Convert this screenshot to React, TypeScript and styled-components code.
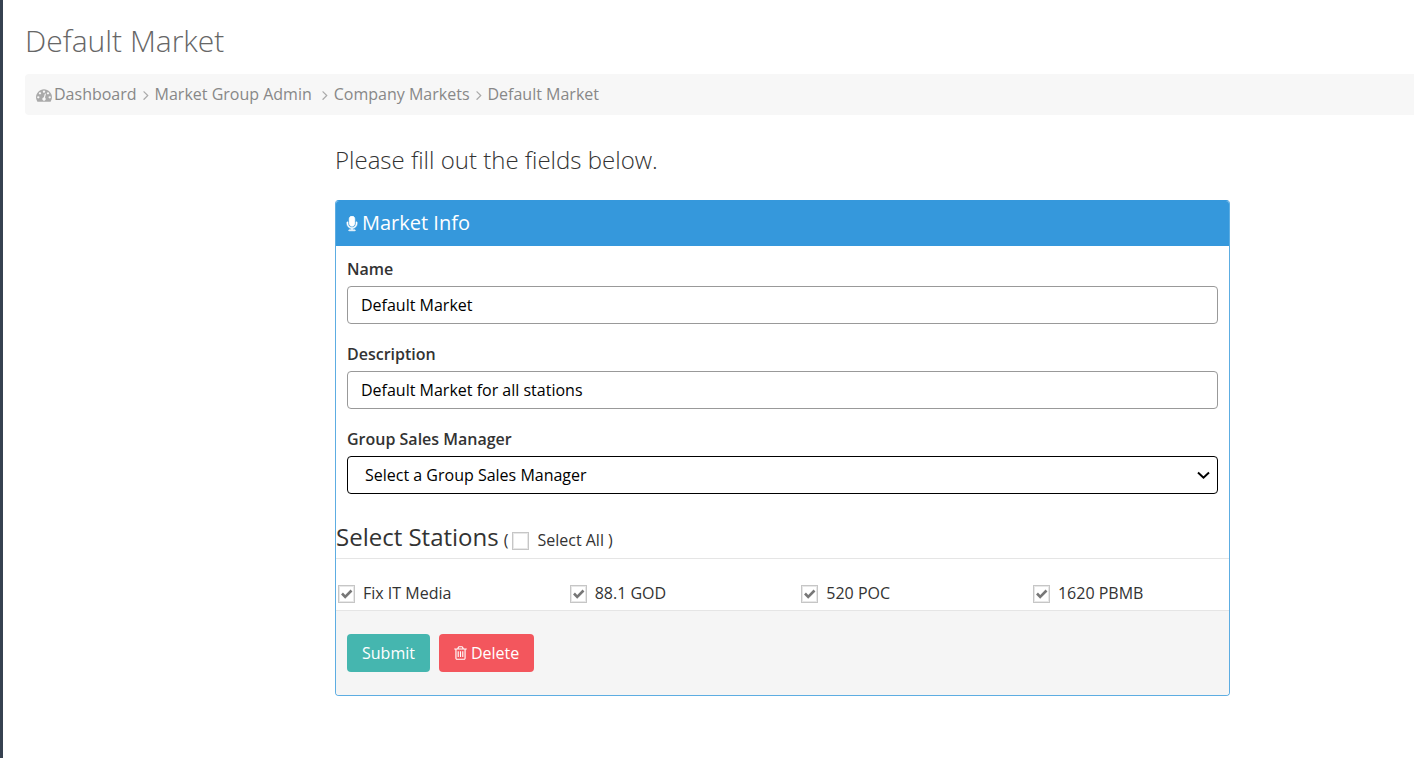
import React, { useState } from 'react';
import styled, { createGlobalStyle, css } from 'styled-components';

const GlobalStyle = createGlobalStyle`
  * { box-sizing: border-box; }
  body {
    margin: 0;
    background: #fff;
    color: #333;
    font: 400 16px/24px 'Open Sans', sans-serif;
  }
`;

const Page = styled.div`
  min-height: 100vh;
  border-left: 3px solid #364150;
  padding: 20px 0 62px 22px;
`;

const PageTitle = styled.h1`
  margin: 0 0 12px;
  color: #666;
  font-size: 30px;
  line-height: 42px;
  font-weight: 300;
`;

const Breadcrumb = styled.nav`
  display: flex;
  align-items: center;
  flex-wrap: wrap;
  min-height: 41px;
  padding: 0 11px 2px;
  background: #f7f7f7;
  border-radius: 4px 0 0 4px;
  color: #aaa;
`;

const Crumb = styled.a<{ $wide?: boolean }>`
  color: #888;
  text-decoration: none;
  margin-right: ${(p) => (p.$wide ? 7 : 3)}px;
`;

const Icon = styled.svg`
  width: 16px;
  height: 16px;
  flex: none;
  fill: currentColor;
`;

const DashboardIcon = styled(Icon)`
  margin: 2px 2px 0 0;
`;

const TrashIcon = styled(Icon)`
  width: 13px;
`;

const CrumbArrow = styled(Icon)`
  width: 12px;
  margin: 2px 3px 0 0;
`;

const Columns = styled.main`
  display: grid;
  grid-template-columns: 310fr 895fr 184fr;
`;

const FormColumn = styled.div`
  grid-column: 2;
  min-width: 0;
`;

const Lead = styled.h3`
  margin: 29px 0 25px;
  font-size: 24px;
  line-height: 31px;
  font-weight: 300;
`;

const Panel = styled.form`
  border: 1px solid #5dade2;
  border-top-color: #3598dc;
  border-radius: 4px;
  overflow: hidden;
`;

const PanelHeader = styled.header`
  display: flex;
  align-items: center;
  gap: 2px;
  height: 45px;
  padding: 0 8px 2px;
  background: #3598dc;
  color: #fff;
`;

const MicrophoneIcon = styled(Icon)`
  margin-top: 2px;
`;

const PanelTitle = styled.h2`
  margin: 0;
  font-size: 20px;
  line-height: 24px;
  font-weight: 400;
`;

const Fields = styled.div`
  display: flex;
  flex-direction: column;
  gap: 18px;
  padding: 11px 11px 26px;
`;

const Field = styled.div`
  display: flex;
  flex-direction: column;
  gap: 5px;
`;

const FieldLabel = styled.label`
  font-weight: 600;
  line-height: 24px;
`;

const controlBox = css`
  width: 100%;
  height: 38px;
  background: #fff;
  border-radius: 4px;
  color: #000;
  font: inherit;
  outline: none;
`;

const TextInput = styled.input`
  ${controlBox}
  padding: 0 13px;
  border: 1px solid #999;
`;

const SelectWrap = styled.div`
  position: relative;
`;

const SelectBox = styled.select`
  ${controlBox}
  display: block;
  appearance: none;
  padding: 0 32px 0 17px;
  border: 1px solid #000;
`;

const SelectArrow = styled.svg`
  position: absolute;
  top: 15px;
  right: 8px;
  width: 13px;
  height: 9px;
  fill: none;
  stroke: #000;
  stroke-width: 2;
  pointer-events: none;
`;

const StationsHeading = styled.div`
  display: flex;
  align-items: baseline;
  gap: 5px;
  padding-bottom: 5px;
  border-bottom: 1px solid #e5e5e5;
`;

const StationsTitle = styled.h3`
  margin: 0;
  font-size: 24px;
  line-height: 33px;
  font-weight: 400;
`;

const SelectAll = styled.div`
  display: flex;
  align-items: center;
  gap: 4px;
`;

const CheckLabel = styled.label`
  display: inline-flex;
  align-items: center;
  gap: 8px;
`;

const CheckBox = styled.span`
  display: grid;
  width: 17px;
  height: 18px;
  margin-top: 2px;

  > * { grid-area: 1 / 1; }
`;

const CheckInput = styled.input`
  appearance: none;
  width: 100%;
  height: 100%;
  margin: 0;
  border: 1px solid #c6c6c6;
  box-shadow: inset 0 0 0 1px #e8e8e8;
  background: #fff;

  &:not(:checked) + svg { visibility: hidden; }
`;

const CheckMark = styled.svg`
  width: 17px;
  height: 18px;
  fill: none;
  stroke: #777;
  stroke-width: 2.6;
  pointer-events: none;
`;

const StationGrid = styled.div`
  display: grid;
  grid-template-columns: repeat(3, 26fr) 22fr;
  padding: 22px 0 5px 2px;
`;

const Actions = styled.footer`
  display: flex;
  gap: 9px;
  padding: 23px 11px;
  background: #f5f5f5;
  border-top: 1px solid #e5e5e5;
`;

const Button = styled.button<{ $color: string }>`
  display: inline-flex;
  align-items: center;
  gap: 4px;
  height: 38px;
  padding: 0 15px;
  border: 0;
  border-radius: 4px;
  background: ${(p) => p.$color};
  color: #fff;
  font: inherit;
  cursor: pointer;
`;

const DASHBOARD =
  'M384 1152q0-53-37.5-90.5t-90.5-37.5-90.5 37.5-37.5 90.5 37.5 90.5 90.5 37.5 90.5-37.5 37.5-90.5zm192-448q0-53-37.5-90.5t-90.5-37.5-90.5 37.5-37.5 90.5 37.5 90.5 90.5 37.5 90.5-37.5 37.5-90.5zm428 481l101-382q6-26-7.5-48.5t-38.5-29.5-48 6.5-30 39.5l-101 382q-60 5-107 43.5t-63 98.5q-20 77 20 146t117 89 146-20 89-117q16-60-6-117t-72-91zm660-33q0-53-37.5-90.5t-90.5-37.5-90.5 37.5-37.5 90.5 37.5 90.5 90.5 37.5 90.5-37.5 37.5-90.5zm-640-640q0-53-37.5-90.5t-90.5-37.5-90.5 37.5-37.5 90.5 37.5 90.5 90.5 37.5 90.5-37.5 37.5-90.5zm448 192q0-53-37.5-90.5t-90.5-37.5-90.5 37.5-37.5 90.5 37.5 90.5 90.5 37.5 90.5-37.5 37.5-90.5zm320 448q0 261-141 483-19 29-54 29h-1402q-35 0-54-29-141-221-141-483 0-182 71-348t191-286 286-191 348-71 348 71 286 191 191 286 71 348z';
const MICROPHONE =
  'M1472 704v128q0 221-147.5 384.5t-364.5 187.5v132h256q26 0 45 19t19 45-19 45-45 19h-640q-26 0-45-19t-19-45 19-45 45-19h256v-132q-217-24-364.5-187.5t-147.5-384.5v-128q0-26 19-45t45-19 45 19 19 45v128q0 185 131.5 316.5t316.5 131.5 316.5-131.5 131.5-316.5v-128q0-26 19-45t45-19 45 19 19 45zm-256-384v512q0 132-94 226t-226 94-226-94-94-226v-512q0-132 94-226t226-94 226 94 94 226z';
const TRASH =
  'M704 736v576q0 14-9 23t-23 9h-64q-14 0-23-9t-9-23v-576q0-14 9-23t23-9h64q14 0 23 9t9 23zm256 0v576q0 14-9 23t-23 9h-64q-14 0-23-9t-9-23v-576q0-14 9-23t23-9h64q14 0 23 9t9 23zm256 0v576q0 14-9 23t-23 9h-64q-14 0-23-9t-9-23v-576q0-14 9-23t23-9h64q14 0 23 9t9 23zm128 724v-948h-896v948q0 22 7 40.5t14.5 27 10.5 8.5h832q3 0 10.5-8.5t14.5-27 7-40.5zm-672-1076h448l-48-117q-7-9-17-11h-317q-10 2-17 11zm928 32v64q0 14-9 23t-23 9h-96v948q0 83-47 143.5t-113 60.5h-832q-66 0-113-58.5t-47-141.5v-952h-96q-14 0-23-9t-9-23v-64q0-14 9-23t23-9h309l70-167q15-37 54-63t79-26h320q40 0 79 26t54 63l70 167h309q14 0 23 9t9 23z';
const ANGLE_RIGHT =
  'M1171 960q0 13-10 23l-466 466q-10 10-23 10t-23-10l-50-50q-10-10-10-23t10-23l393-393-393-393q-10-10-10-23t10-23l50-50q10-10 23-10t23 10l466 466q10 10 10 23z';

const CRUMBS = [
  { text: 'Dashboard' },
  { text: 'Market Group Admin', wide: true },
  { text: 'Company Markets' },
  { text: 'Default Market' },
];

const STATIONS = ['Fix IT Media', '88.1 GOD', '520 POC', '1620 PBMB'];

interface CheckProps {
  label: string;
  checked: boolean;
  onChange: (checked: boolean) => void;
}

function Check({ label, checked, onChange }: CheckProps) {
  return (
    <CheckLabel>
      <CheckBox>
        <CheckInput type="checkbox" checked={checked} onChange={(e) => onChange(e.target.checked)} />
        <CheckMark viewBox="0 0 17 18" aria-hidden="true">
          <path d="M4 8.5l3.2 3.4L13.5 5.5" />
        </CheckMark>
      </CheckBox>
      {label}
    </CheckLabel>
  );
}

export default function App() {
  const [selected, setSelected] = useState<string[]>(STATIONS);
  const [all, setAll] = useState(false);

  const toggleAll = (on: boolean) => {
    setAll(on);
    setSelected(on ? STATIONS : []);
  };
  const toggle = (name: string, on: boolean) =>
    setSelected((list) => (on ? [...list, name] : list.filter((item) => item !== name)));

  return (
    <>
      <GlobalStyle />
      <Page>
        <PageTitle>Default Market</PageTitle>
        <Breadcrumb aria-label="Breadcrumb">
          <DashboardIcon viewBox="0 0 1792 1792" aria-hidden="true">
            <path d={DASHBOARD} />
          </DashboardIcon>
          {CRUMBS.map((crumb, i) => (
            <React.Fragment key={crumb.text}>
              {i > 0 && (
                <CrumbArrow viewBox="224 0 1344 1792" aria-hidden="true">
                  <path d={ANGLE_RIGHT} />
                </CrumbArrow>
              )}
              <Crumb href="#" $wide={crumb.wide}>{crumb.text}</Crumb>
            </React.Fragment>
          ))}
        </Breadcrumb>
        <Columns>
          <FormColumn>
            <Lead>Please fill out the fields below.</Lead>
            <Panel onSubmit={(e) => e.preventDefault()}>
              <PanelHeader>
                <MicrophoneIcon viewBox="0 0 1792 1792" aria-hidden="true">
                  <path d={MICROPHONE} stroke="currentColor" strokeWidth="60" />
                </MicrophoneIcon>
                <PanelTitle>Market Info</PanelTitle>
              </PanelHeader>
              <Fields>
                <Field>
                  <FieldLabel htmlFor="name">Name</FieldLabel>
                  <TextInput id="name" type="text" defaultValue="Default Market" />
                </Field>
                <Field>
                  <FieldLabel htmlFor="description">Description</FieldLabel>
                  <TextInput id="description" type="text" defaultValue="Default Market for all stations" />
                </Field>
                <Field>
                  <FieldLabel htmlFor="manager">Group Sales Manager</FieldLabel>
                  <SelectWrap>
                    <SelectBox id="manager">
                      <option>Select a Group Sales Manager</option>
                    </SelectBox>
                    <SelectArrow viewBox="0 0 13 9" aria-hidden="true">
                      <path d="M1 1.5l5.5 5.2L12 1.5" />
                    </SelectArrow>
                  </SelectWrap>
                </Field>
              </Fields>
              <StationsHeading>
                <StationsTitle>Select Stations</StationsTitle>
                <SelectAll>
                  <span>(</span>
                  <Check label="Select All" checked={all} onChange={toggleAll} />
                  <span>)</span>
                </SelectAll>
              </StationsHeading>
              <StationGrid>
                {STATIONS.map((name) => (
                  <Check
                    key={name}
                    label={name}
                    checked={selected.includes(name)}
                    onChange={(on) => toggle(name, on)}
                  />
                ))}
              </StationGrid>
              <Actions>
                <Button type="submit" $color="#45b6af">Submit</Button>
                <Button type="button" $color="#f3565d">
                  <TrashIcon viewBox="192 0 1408 1792" aria-hidden="true">
                    <path d={TRASH} />
                  </TrashIcon>
                  Delete
                </Button>
              </Actions>
            </Panel>
          </FormColumn>
        </Columns>
      </Page>
    </>
  );
}
